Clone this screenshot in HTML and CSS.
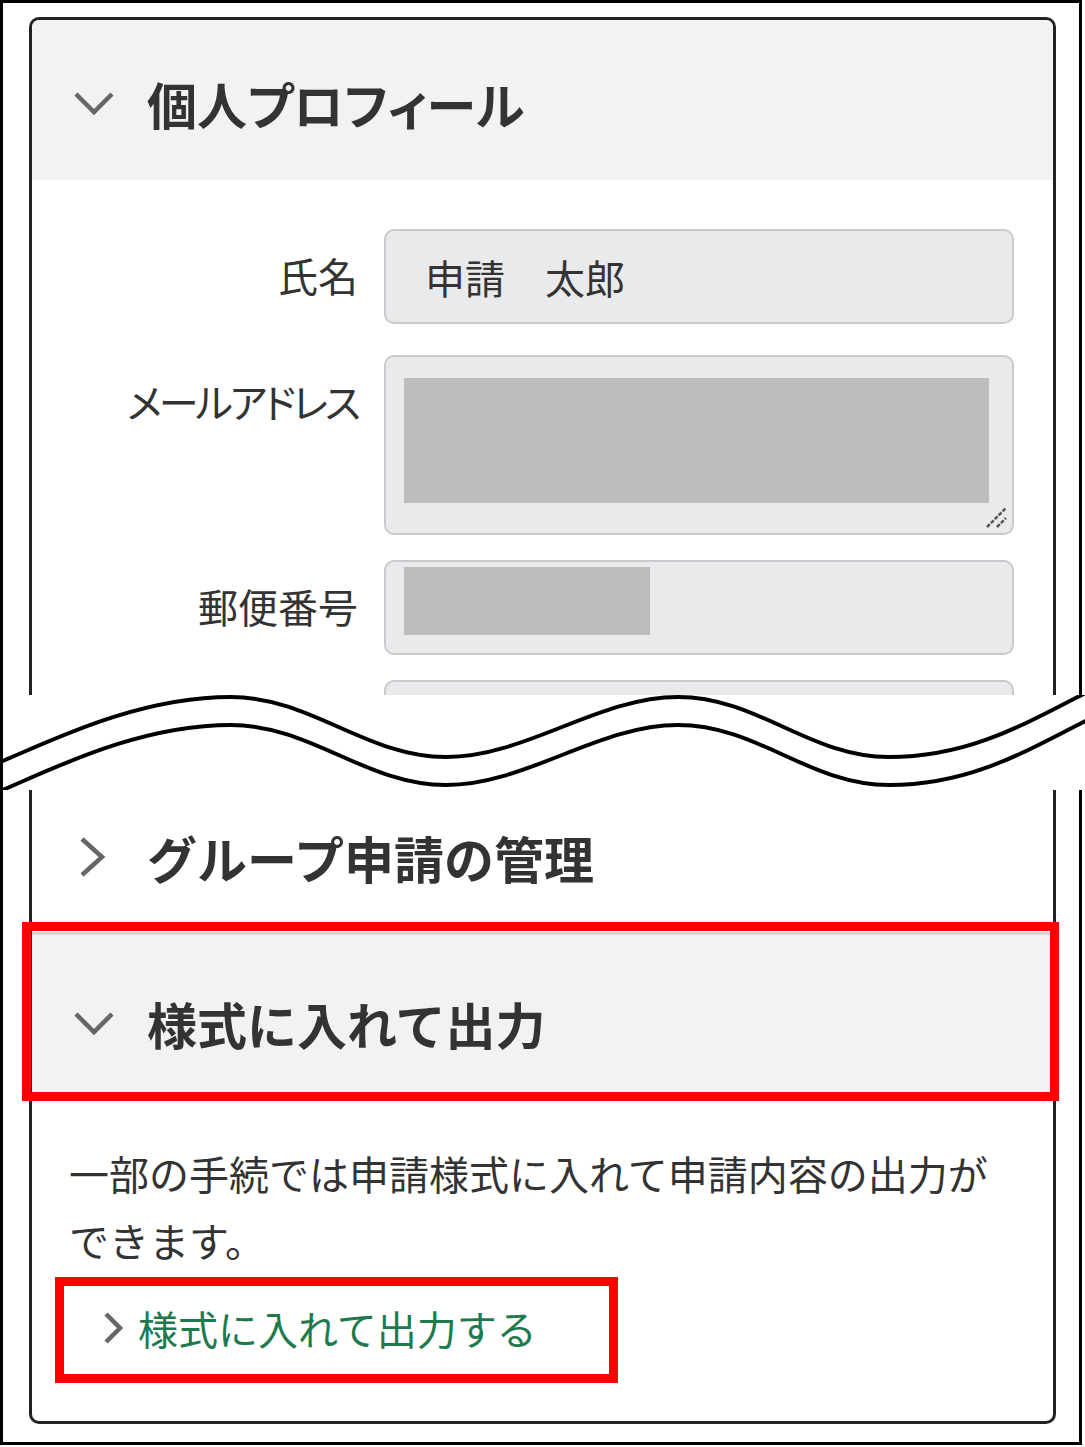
FILE: index.html
```html
<!DOCTYPE html>
<html lang="ja">

<head>
    <meta charset="UTF-8">
    <meta name="viewport" content="width=device-width, initial-scale=1.0">
    <title>個人プロフィール</title>

    <link rel="stylesheet" href="styles.css">

</head>

<body>

    <div class="frame">

        <div class="card card-top">

            <div class="acc-head">
                <span class="acc-icon">
                    <svg width="42" height="28" viewBox="0 0 42 28"><polyline points="3,5 21,23 39,5"/></svg>
                </span>
                <h2 class="acc-title acc-title-kana">個人プロフィール</h2>
            </div>

            <div class="form">
                <div class="label">氏名</div>
                <div class="field">申請　太郎</div>

                <div class="label label-narrow">メールアドレス</div>
                <div class="field field-area">
                    <span class="masked masked-mail"></span>
                    <svg class="grip" width="24" height="24" viewBox="0 0 24 24">
                        <line x1="3" y1="22" x2="22" y2="3"/>
                        <line x1="13" y1="22" x2="22" y2="13"/>
                    </svg>
                </div>

                <div class="label">郵便番号</div>
                <div class="field field-zip">
                    <span class="masked masked-zip"></span>
                </div>

                <!-- 以下省略 -->
                <div class="label"></div>
                <div class="field"></div>
            </div>

        </div>

        <div class="break">
            <svg width="1082" height="95" viewBox="0 0 1082 95">
                <path d="M-10,70 C40,50 130,2 228,2 C308,2 363,62 443,62 C523,62 595,2 675,2 C755,2 806,62 886,62 C966,62 1020,30 1090,-6"/>
                <path d="M-10,99 C40,79 130,30 228,30 C308,30 363,90 443,90 C523,90 595,30 675,30 C755,30 806,90 886,90 C966,90 1020,58 1090,22"/>
            </svg>
        </div>

        <div class="card card-bottom">

            <div class="acc-head acc-head-plain">
                <span class="acc-icon">
                    <svg width="42" height="42" viewBox="0 0 42 42"><polyline points="9,3 29,21 9,39"/></svg>
                </span>
                <h2 class="acc-title">グループ申請の管理</h2>
            </div>

            <!-- 赤枠：注目箇所 -->
            <div class="acc-head acc-head-open marked">
                <span class="acc-icon">
                    <svg width="42" height="28" viewBox="0 0 42 28"><polyline points="3,5 21,23 39,5"/></svg>
                </span>
                <h2 class="acc-title">様式に入れて出力</h2>
            </div>

            <div class="acc-body">
                <p class="note">一部の手続では申請様式に入れて申請内容の出力ができます。</p>
                <a class="link marked marked-link" href="#">
                    <svg width="20" height="32" viewBox="0 0 20 32"><polyline points="3,2 17,16 3,30"/></svg>
                    様式に入れて出力する
                </a>
            </div>

        </div>

    </div>

</body>
</html>
```

FILE: styles.css
```css
body {
    margin: 0;
    background-color: #fff;
    font-family: "Noto Sans CJK JP", sans-serif;
    color: #333;
}

.frame {
    width: 1082px;
    height: 1445px;
    box-sizing: border-box;
    border: 3px solid #000;
    padding-top: 14px;
}

.card {
    margin: 0 23px 0 26px;
    border: 3px solid #222;
    background-color: #fff;
}

.card-top {
    height: 678px;
    box-sizing: border-box;
    border-bottom: none;
    border-radius: 10px 10px 0 0;
    overflow: hidden;
}

.card-bottom {
    height: 634px;
    box-sizing: border-box;
    border-top: none;
    border-radius: 0 0 10px 10px;
}

/* アコーディオン見出し */
.acc-head {
    display: flex;
    align-items: center;
    height: 160px;
    box-sizing: border-box;
    padding: 6px 0 0 41px;
    background-color: #f2f2f2;
}

.acc-head-plain {
    height: 142px;
    padding: 0 0 8px 41px;
    background-color: #fff;
}

.acc-head-open {
    height: 161px;
    padding-top: 17px;
    border-top: 3px solid #d6d6d6;
}

.acc-icon {
    display: flex;
    width: 42px;
    margin-right: 32px;
}

.acc-icon svg polyline, .link svg polyline {
    fill: none;
    stroke: #666;
    stroke-width: 4.5;
}

.acc-title {
    margin: 0;
    font-size: 50px;
    font-weight: bold;
    line-height: 1.2;
    color: #333;
}

.acc-title-kana {
    font-feature-settings: "palt";
}

/* フォーム */
.form {
    display: grid;
    grid-template-columns: 326px 1fr;
    column-gap: 26px;
    row-gap: 25px;
    padding: 49px 39px 0 0;
}

.label {
    padding-top: 16px;
    font-size: 40px;
    line-height: 60px;
    text-align: right;
}

.label-narrow {
    font-feature-settings: "palt";
    letter-spacing: -3px;
    margin-top: 6px;
}

.field {
    height: 95px;
    box-sizing: border-box;
    display: flex;
    align-items: center;
    padding-left: 39px;
    border: 2px solid #c9cacd;
    border-radius: 10px;
    background-color: #e9eaec;
    font-size: 40px;
}

.field-area {
    position: relative;
    height: 180px;
    margin-top: 6px;
    align-items: flex-start;
    padding: 21px 23px 0 18px;
}

.field-zip {
    align-items: flex-start;
    padding: 5px 0 0 18px;
}

.masked {
    display: block;
    background-color: #bdbdbd;
}

.masked-mail {
    width: 100%;
    height: 125px;
}

.masked-zip {
    width: 246px;
    height: 68px;
}

.grip {
    position: absolute;
    right: 4px;
    bottom: 4px;
}

.grip line {
    stroke: #555;
    stroke-width: 2.5;
    stroke-dasharray: 4 1.5;
}

/* 省略線 */
.break {
    height: 95px;
    margin-right: -3px;
    background-color: #fff;
}

.break svg {
    display: block;
}

.break path {
    fill: none;
    stroke: #000;
    stroke-width: 4;
}

/* 本文 */
.acc-body {
    padding: 47px 37px 0 37px;
}

.note {
    margin: 0;
    font-size: 40px;
    line-height: 67px;
}

.link {
    display: inline-flex;
    align-items: center;
    gap: 15px;
    margin: 24px 0 0 34px;
    font-size: 40px;
    line-height: 60px;
    color: #1e7a4d;
    text-decoration: none;
}

/* 赤枠 */
.marked {
    position: relative;
}

.marked::after {
    content: "";
    position: absolute;
    top: -13px;
    right: -6px;
    bottom: -8px;
    left: -10px;
    border: 9px solid #f00;
}

.marked-link::after {
    top: -21px;
    right: -81px;
    bottom: -25px;
    left: -48px;
}
```
